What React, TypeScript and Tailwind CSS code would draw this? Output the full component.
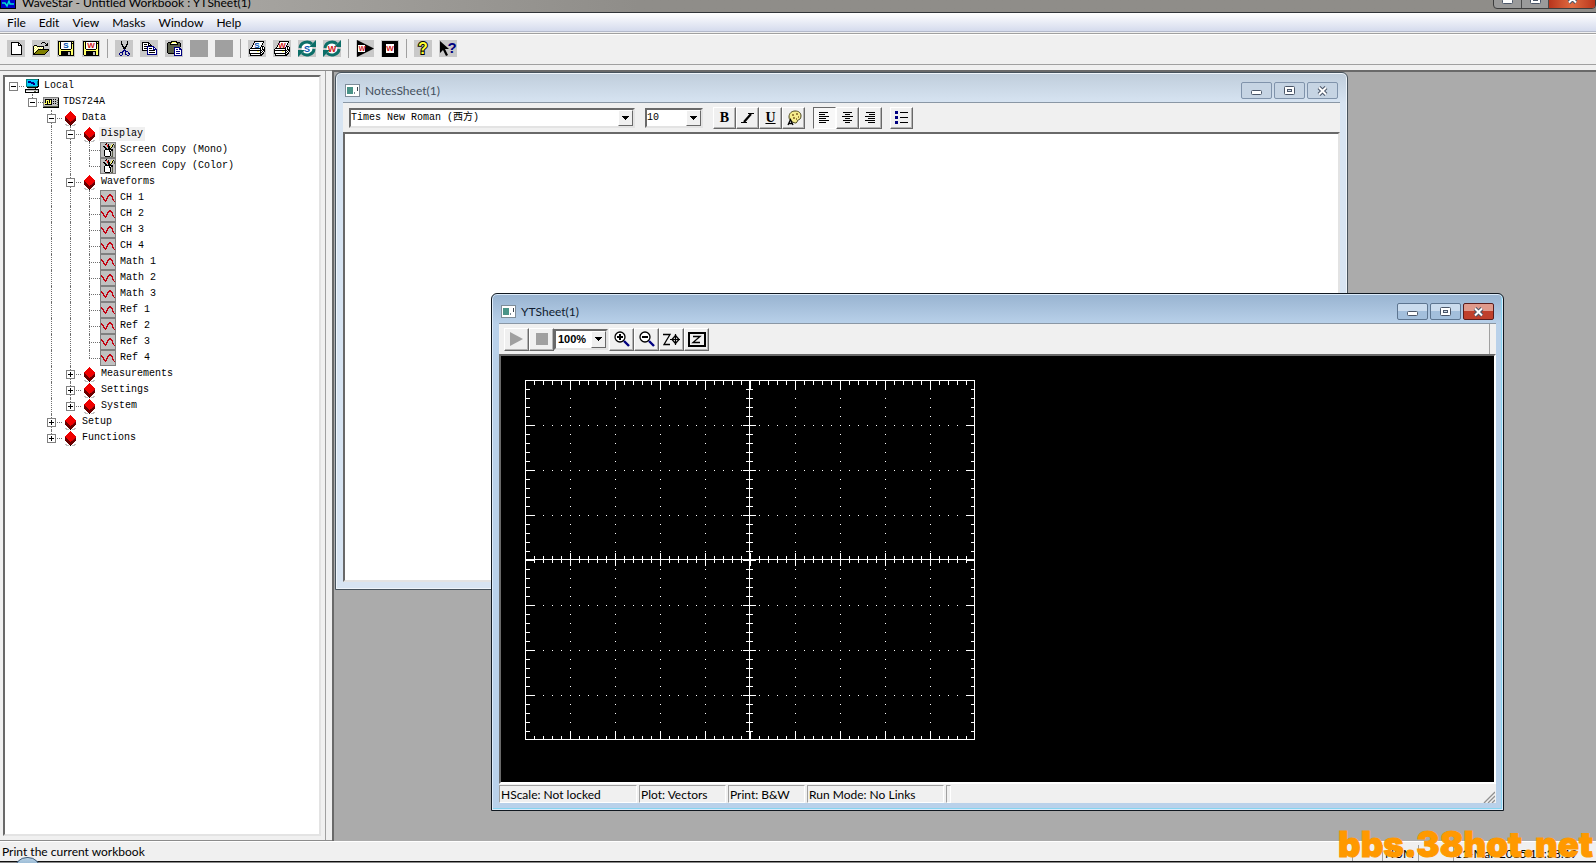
import { useState } from "react";
import type { ReactNode } from "react";

const COLORS: Record<string, string> = {
  k: "#000000",
  w: "#ffffff",
  y: "#ffff66",
  o: "#808000",
  s: "#c0c0c0",
  d: "#808080",
  b: "#000080",
  t: "#008080",
  c: "#00c8ff",
  r: "#f00000",
  m: "#c40010",
  n: "#6a0000",
  g: "#5a5f4a",
};

const Sprite = ({ rows }: { rows: string[] }) => {
  const width = rows[0].length;
  return (
    <svg
      width={width}
      height={rows.length}
      viewBox={`0 0 ${width} ${rows.length}`}
      shapeRendering="crispEdges"
      aria-hidden="true"
      className="block"
    >
      {rows.map((row, y) =>
        row
          .split("")
          .map((ch, x) =>
            COLORS[ch] ? (
              <rect key={`${x}-${y}`} x={x} y={y} width="1" height="1" fill={COLORS[ch]} />
            ) : null,
          ),
      )}
    </svg>
  );
};

const NEW_ROWS = [
  "kkkkkkkk...",
  "kwwwwwwkk..",
  "kwwwwwwkwk.",
  "kwwwwwwkkkk",
  "kwwwwwwwwwk",
  "kwwwwwwwwwk",
  "kwwwwwwwwwk",
  "kwwwwwwwwwk",
  "kwwwwwwwwwk",
  "kwwwwwwwwwk",
  "kwwwwwwwwwk",
  "kwwwwwwwwwk",
  "kkkkkkkkkkk",
];

const OPEN_ROWS = [
  ".........kkk....",
  "........k...k.k.",
  ".............kk.",
  ".kkk........kkk.",
  "kywykkkkkkk.....",
  "kwywywywywk.....",
  "kywywywywyk.....",
  "kwywykkkkkkkkkkk",
  "kywykooooooooook",
  "kwykooooooooook.",
  "kykooooooooook..",
  "kkooooooooook...",
  "kkkkkkkkkkkk....",
];

const SAVE_ROWS = [
  "kkkkkkkkkkkkkkkk",
  "kykwwwwwwwwwwkyk",
  "kykwwwwwwwwwwkkk",
  "kykwwwwwwwwwwkyk",
  "kykwwwwwwwwwwkyk",
  "kykwwwwwwwwwwkyk",
  "kykwwwwwwwwwwkyk",
  "kykwwwwwwwwwwkyk",
  "kyykkkkkkkkkkyyk",
  "kyyyyyyyyyyyyyyk",
  "kyykkkkkkkkkkyyk",
  "kyykkkkkkksskyyk",
  "kyykkkkkkksskyyk",
  "kyykkkkkkksskyyk",
  ".kkkkkkkkkkkkkkk",
];

const CUT_ROWS = [
  "..k.....k..",
  "..k.....k..",
  "..k.....k..",
  "..kk...kk..",
  "...k...k...",
  "...kk.kk...",
  "....kkk....",
  "....kkk....",
  ".....b.....",
  "....bbb....",
  "...bb.bbb..",
  ".bbb..b..b.",
  "b..b..b..bb",
  "b..b..bb..b",
  ".bb.....bb.",
];

const COPY_ROWS = [
  "kkkkkkk........",
  "kwwwwwkk.......",
  "kwkkkwkwk......",
  "kwwwwwkkkk.....",
  "kwkkkbbbbbbb...",
  "kwwwwbwwwwwbb..",
  "kwkkkbwkkkwbwb.",
  "kwwwwbwwwwwbbbb",
  "kkkkkbwkkkkkkwb",
  ".....bwwwwwwwwb",
  ".....bwkkkkkkwb",
  ".....bwwwwwwwwb",
  ".....bbbbbbbbbb",
];

const PASTE_ROWS = [
  "....kkkkkk.....",
  ".kkkkyyyykkkk..",
  "kggkywwwwykggk.",
  "kggkkkkkkkkggk.",
  "kggggggggggggk.",
  "kggggggggggggk.",
  "kggggggbbbbbb..",
  "kggggggbwwwwbb.",
  "kggggggbwbbwbbb",
  "kggggggbwwwwwwb",
  "kggggggbwbbbbwb",
  "kggggggbwwwwwwb",
  ".kkkkkkbwbbbbwb",
  ".......bwwwwwwb",
  ".......bbbbbbbb",
];

const PRINT_ROWS = [
  ".....kkkkkkkkkk.",
  ".....kwwwwwwwwk.",
  "....kwwwwwwwwk..",
  "....kwwwwwwwwk..",
  "...kwwwwwwwwk...",
  "...kwwwwwwwwkkk.",
  "..kwwwwwwwwkwkwk",
  ".kkkkkkkkkkkwkwk",
  "kwwwwwwwwwwkwkkk",
  "kkkkkkkkkkkkkwkk",
  "kwwwwwwwyywkwkwk",
  "kwwwwwwwwwwkkwk.",
  "kkkkkkkkkkkkwkk.",
  ".kwwwwwwwwwkkk..",
  ".kkkkkkkkkkkk...",
];

const COMPUTER_ROWS = [
  ".ttttttttttttk",
  ".tccccccccccck",
  ".tcbbbcccccctk",
  ".tcbbbbbbccctk",
  ".tccccbbbbcctk",
  ".tccccccbbcctk",
  ".tccccccccccck",
  ".tttttttttttkk",
  "..kkkkkkkkkkk.",
  "...sssssssk...",
  "kkkkkkkkkkkkkk",
  "kssssssssssssk",
  "kwwwwwwwwggwsk",
  "kkkkkkkkkkkkkk",
];

const SCOPE_ROWS = [
  "dddddddddddddddd",
  "dssssssssssssssk",
  "dskkkkkkkskskssk",
  "dskyyykyksssssgk",
  "dskykykykskskssk",
  "dskykykyksssssgk",
  "dyyykyyykskskssk",
  "dskkkkkkksssssgk",
  "dssssssssssssssk",
  "dggggggggggggggk",
  "kkkkkkkkkkkkkkkk",
];

const DIAMOND_ROWS = [
  ".....r.....",
  "....rrr....",
  "...rrrrr...",
  "..rrrrrrr..",
  ".rrrrrrrrr.",
  "rrrrrrrrrrr",
  "nrrrrrrrrrm",
  "nnrrrrrrrmn",
  "nnnrrrrrmnn",
  "nnnnrrrmnnn",
  ".nnnnrnnnn.",
  "..nnnnnnn..",
  "...nnnnn...",
  "ss..nnn..ss",
  ".sss.k.sss.",
];

const CAMERA_ROWS = [
  "dddddddddddddddd",
  "dssssskssssssssd",
  "dsssskrsksssyksd",
  "dssssssrkssyksgd",
  "dsskkssrkksyksgd",
  "dssskksskkykssgd",
  "dsssskkskkkssssd",
  "dsssskkkkkkkkssd",
  "dssskwwwwkwkkssd",
  "dssskwwwwkksgssd",
  "dssskwwwwwksgssd",
  "dssskwwwwwksgssd",
  "dssskwwwwwksgssd",
  "dssskwwwwwksgssd",
  "dsssskkkkksggssd",
  "dddddddddddddddd",
];

const WAVE_ROWS = [
  "dddddddddddddddd",
  "dssssssssssssssd",
  "dssssssssssssssd",
  "dssssssssssssssd",
  "dssssssssmmssssd",
  "dmssssssmmmmsssd",
  "dmmssssmmssmmssd",
  "dsmmsssmssssmssd",
  "dssmssmmssssmssd",
  "dssmmsmsssssmmsd",
  "dsssmmmssssssmsd",
  "dssssmssssssssmd",
  "dssssssssssssssd",
  "dssssssssssssssd",
  "dssssssssssssssd",
  "dddddddddddddddd",
];

const Lettered = ({ rows, letter }: { rows: string[]; letter: "S" | "W" }) => (
  <span className="relative block">
    <Sprite rows={rows} />
    <span
      className={`absolute inset-x-0 top-0 text-center font-['Liberation_Sans'] text-[8px] leading-[9px] font-bold ${
        letter === "S" ? "text-[#0050b0]" : "text-[#d02020]"
      }`}
    >
      {letter}
    </span>
  </span>
);

const RefreshIcon = ({ letter }: { letter: "S" | "W" }) => (
  <svg width="18" height="17" viewBox="0 0 18 17" aria-hidden="true">
    <circle cx="9" cy="8.5" r="5.5" fill="#fff" />
    <path d="M2 8 A7 6.5 0 0 1 14 4" fill="none" stroke="#0c6e68" strokeWidth="3" />
    <path d="M11 7 L18 7 L18 0 Z" fill="#0c6e68" />
    <path d="M16 9 A7 6.5 0 0 1 4 13" fill="none" stroke="#0c6e68" strokeWidth="3" />
    <path d="M7 10 L0 10 L0 17 Z" fill="#0c6e68" />
    <text
      x="9"
      y="12"
      textAnchor="middle"
      fontFamily="Liberation Sans"
      fontWeight="700"
      fontSize="9"
      fill={letter === "S" ? "#0050b0" : "#d02020"}
    >
      {letter}
    </text>
  </svg>
);

const RunIcon = () => (
  <svg width="18" height="17" viewBox="0 0 18 17" aria-hidden="true">
    <path d="M1 0 L18 8.5 L1 17 Z" fill="#000" />
    <rect x="2" y="5" width="7" height="7" fill="#fff" />
    <text x="6" y="11" textAnchor="middle" fontFamily="Liberation Sans" fontWeight="700" fontSize="7" fill="#d02020">
      W
    </text>
  </svg>
);

const StopIcon = () => (
  <svg width="18" height="17" viewBox="0 0 18 17" aria-hidden="true">
    <rect x="1" y="1" width="16" height="16" fill="#000" />
    <rect x="5" y="4" width="8" height="9" fill="#fff" />
    <text x="9" y="11" textAnchor="middle" fontFamily="Liberation Sans" fontWeight="700" fontSize="8" fill="#d02020">
      W
    </text>
  </svg>
);

const HelpIcon = () => (
  <svg width="18" height="17" viewBox="0 0 18 17" aria-hidden="true">
    <text
      x="9"
      y="14"
      textAnchor="middle"
      fontFamily="Liberation Sans"
      fontWeight="700"
      fontSize="16"
      fill="#ffff33"
      stroke="#000"
      strokeWidth="2"
      paintOrder="stroke"
    >
      ?
    </text>
  </svg>
);

const ContextHelpIcon = () => (
  <svg width="18" height="17" viewBox="0 0 18 17" aria-hidden="true">
    <path d="M1 1 L1 13 L4 10 L7 16 L9 15 L6 9 L10 9 Z" fill="#000" />
    <text x="13" y="13" textAnchor="middle" fontFamily="Liberation Sans" fontWeight="700" fontSize="15" fill="#000080">
      ?
    </text>
  </svg>
);

const Blank = () => <span className="block h-[17px] w-[18px] bg-[#a0a0a0]" />;

type Tool = { label: string; icon: ReactNode } | null;

const MAIN_TOOLS: Tool[] = [
  { label: "New", icon: <Sprite rows={NEW_ROWS} /> },
  { label: "Open", icon: <Sprite rows={OPEN_ROWS} /> },
  { label: "Save sheet", icon: <Lettered rows={SAVE_ROWS} letter="S" /> },
  { label: "Save workbook", icon: <Lettered rows={SAVE_ROWS} letter="W" /> },
  null,
  { label: "Cut", icon: <Sprite rows={CUT_ROWS} /> },
  { label: "Copy", icon: <Sprite rows={COPY_ROWS} /> },
  { label: "Paste", icon: <Sprite rows={PASTE_ROWS} /> },
  { label: "Undo", icon: <Blank /> },
  { label: "Redo", icon: <Blank /> },
  null,
  { label: "Print sheet", icon: <Lettered rows={PRINT_ROWS} letter="S" /> },
  { label: "Print workbook", icon: <Lettered rows={PRINT_ROWS} letter="W" /> },
  { label: "Refresh sheet", icon: <RefreshIcon letter="S" /> },
  { label: "Refresh workbook", icon: <RefreshIcon letter="W" /> },
  null,
  { label: "Run workbook", icon: <RunIcon /> },
  { label: "Stop workbook", icon: <StopIcon /> },
  null,
  { label: "Help", icon: <HelpIcon /> },
  { label: "Context help", icon: <ContextHelpIcon /> },
];

interface TreeItem {
  name: string;
  icon: string[];
  children?: TreeItem[];
  expandable?: boolean;
  selected?: boolean;
}

const leaf = (name: string): TreeItem => ({ name, icon: WAVE_ROWS });

const TREE: TreeItem = {
  name: "Local",
  icon: COMPUTER_ROWS,
  children: [
    {
      name: "TDS724A",
      icon: SCOPE_ROWS,
      children: [
        {
          name: "Data",
          icon: DIAMOND_ROWS,
          children: [
            {
              name: "Display",
              icon: DIAMOND_ROWS,
              selected: true,
              children: [
                { name: "Screen Copy (Mono)", icon: CAMERA_ROWS },
                { name: "Screen Copy (Color)", icon: CAMERA_ROWS },
              ],
            },
            {
              name: "Waveforms",
              icon: DIAMOND_ROWS,
              children: [
                leaf("CH 1"),
                leaf("CH 2"),
                leaf("CH 3"),
                leaf("CH 4"),
                leaf("Math 1"),
                leaf("Math 2"),
                leaf("Math 3"),
                leaf("Ref 1"),
                leaf("Ref 2"),
                leaf("Ref 3"),
                leaf("Ref 4"),
              ],
            },
            { name: "Measurements", icon: DIAMOND_ROWS, expandable: true },
            { name: "Settings", icon: DIAMOND_ROWS, expandable: true },
            { name: "System", icon: DIAMOND_ROWS, expandable: true },
          ],
        },
        { name: "Setup", icon: DIAMOND_ROWS, expandable: true },
        { name: "Functions", icon: DIAMOND_ROWS, expandable: true },
      ],
    },
  ],
};

interface TreeNodeProps {
  item: TreeItem;
  // one entry per ancestor: does its line run on below this row
  guides: boolean[];
  last: boolean;
  root?: boolean;
}

const TreeNode = ({ item, guides, last, root }: TreeNodeProps) => {
  const [open, setOpen] = useState(Boolean(item.children));
  const hasToggle = Boolean(item.children) || item.expandable;

  return (
    <li>
      <div className="flex h-4 items-center">
        {guides.map((on, i) => (
          <span key={i} className="relative h-4 w-[19px] shrink-0">
            {on && (
              <span className="absolute inset-y-0 left-2 border-l border-dotted border-[#707070]" />
            )}
          </span>
        ))}
        <span className="relative flex h-4 w-[19px] shrink-0 items-center pl-1">
          {!root && (
            <span
              className={`absolute top-0 left-2 border-l border-dotted border-[#707070] ${last ? "h-2" : "h-4"}`}
            />
          )}
          <span className="absolute top-2 right-0 left-2 border-t border-dotted border-[#707070]" />
          {hasToggle && (
            <button
              aria-label={`${open ? "Collapse" : "Expand"} ${item.name}`}
              onClick={() => setOpen(!open)}
              className="relative size-[9px] border border-[#808080] bg-white"
            >
              <span className="absolute top-[3px] left-px h-px w-[5px] bg-black" />
              {!open && <span className="absolute top-px left-[3px] h-[5px] w-px bg-black" />}
            </button>
          )}
        </span>
        <span className="flex h-4 w-4 shrink-0 items-center justify-center">
          <Sprite rows={item.icon} />
        </span>
        <span className={`ml-[2px] px-[2px] whitespace-nowrap ${item.selected ? "bg-[#f0f0f0]" : ""}`}>
          {item.name}
        </span>
      </div>
      {open && item.children && (
        <ul>
          {item.children.map((child, i) => (
            <TreeNode
              key={child.name}
              item={child}
              guides={[...guides, !last]}
              last={i === item.children!.length - 1}
            />
          ))}
        </ul>
      )}
    </li>
  );
};

const MinimizeGlyph = () => (
  <svg width="11" height="5" viewBox="0 0 11 5" aria-hidden="true">
    <rect x="0.5" y="0.5" width="10" height="4" rx="1" fill="#fff" stroke="#4b5668" />
  </svg>
);

const MaximizeGlyph = () => (
  <svg width="11" height="9" viewBox="0 0 11 9" aria-hidden="true">
    <rect x="0.5" y="0.5" width="10" height="8" rx="1" fill="#fff" stroke="#4b5668" />
    <rect x="3.5" y="3.5" width="4" height="2" fill="#cfdbe8" stroke="#4b5668" />
  </svg>
);

const CloseGlyph = () => (
  <svg width="13" height="10" viewBox="0 0 13 10" aria-hidden="true">
    <path d="M3 1.5 L10 8.5 M10 1.5 L3 8.5" stroke="#4b5668" strokeWidth="4" />
    <path d="M3 1.5 L10 8.5 M10 1.5 L3 8.5" stroke="#fff" strokeWidth="2" />
  </svg>
);

interface SheetWindowProps {
  title: string;
  active?: boolean;
  className: string;
  children: ReactNode;
}

const SheetWindow = ({ title, active, className, children }: SheetWindowProps) => {
  const control = active
    ? "border-[#5d7590] bg-linear-to-b from-[#cbdcee] from-50% to-[#a3bfdc] to-50%"
    : "border-[#8093ab] bg-[#c6d4e3]";

  return (
    <section
      className={`absolute flex h-[518px] w-[1013px] flex-col rounded-t-[6px] border px-[7px] pb-[7px] ${
        active
          ? "border-[#101820] bg-linear-to-b from-[#98b3d0] to-[#b9d1ea] to-[30px] shadow-[inset_0_0_0_1px_#dcebfa,inset_-2px_-2px_0_#86d4f0]"
          : "border-[#46525c] bg-linear-to-b from-[#bfcddb] to-[#d7e4f2] to-[30px] shadow-[inset_0_0_0_1px_#eef4fa]"
      } ${className}`}
    >
      <header className="flex h-[29px] shrink-0 items-center px-[2px] pt-[6px]">
        <svg width="15" height="13" viewBox="0 0 15 13" shapeRendering="crispEdges" aria-hidden="true">
          <rect width="15" height="13" fill="#7e8c98" />
          <rect x="1" y="1" width="13" height="11" fill="#fff" />
          <rect x="2" y="3" width="6" height="7" fill="#4a9488" />
          <rect x="9" y="8" width="1" height="2" fill="#7e8c98" />
          <rect x="12" y="3" width="1" height="4" fill="#3c4650" />
        </svg>
        <h2 className={`ml-[5px] flex-1 text-[12px] leading-4 ${active ? "text-[#101c30]" : "text-[#44505e]"}`}>
          {title}
        </h2>
        <div className="flex gap-[2px]">
          <button
            aria-label="Minimize"
            className={`flex h-[17px] w-[31px] items-end justify-center rounded-[2px] border pb-[3px] ${control}`}
          >
            <MinimizeGlyph />
          </button>
          <button
            aria-label="Maximize"
            className={`flex h-[17px] w-[31px] items-center justify-center rounded-[2px] border ${control}`}
          >
            <MaximizeGlyph />
          </button>
          <button
            aria-label="Close"
            className={`flex h-[17px] w-[31px] items-center justify-center rounded-[2px] border ${
              active
                ? "border-[#5a1c1c] bg-linear-to-b from-[#e09a8c] from-50% to-[#c0402c] to-50%"
                : "border-[#8093ab] bg-[#c6d4e3]"
            }`}
          >
            <CloseGlyph />
          </button>
        </div>
      </header>
      <div className="flex min-h-0 flex-1 flex-col border-t border-[#8a97a5] bg-[#f0f0f0]">{children}</div>
    </section>
  );
};

interface ComboProps {
  label: string;
  value: string;
  className: string;
}

const Combo = ({ label, value, className }: ComboProps) => (
  <div
    className={`relative flex border-2 border-t-[#696969] border-r-[#e3e3e3] border-b-[#e3e3e3] border-l-[#696969] bg-white ${className}`}
  >
    <select aria-label={label} className="h-full w-full appearance-none pr-4 outline-none">
      <option>{value}</option>
    </select>
    <span className="pointer-events-none absolute inset-y-0 right-0 flex w-[15px] items-center justify-center border border-t-white border-r-[#696969] border-b-[#696969] border-l-white bg-[#f0f0f0]">
      <svg width="7" height="4" viewBox="0 0 7 4" shapeRendering="crispEdges" aria-hidden="true">
        <path d="M0 0 H7 V1 H6 V2 H5 V3 H4 V4 H3 V3 H2 V2 H1 V1 H0 Z" fill="#000" />
      </svg>
    </span>
  </div>
);

interface ToolButtonProps {
  label: string;
  pressed?: boolean;
  className: string;
  children: ReactNode;
}

const ToolButton = ({ label, pressed, className, children }: ToolButtonProps) => (
  <button
    aria-label={label}
    className={`flex shrink-0 items-center justify-center border ${
      pressed
        ? "border-t-[#696969] border-r-white border-b-white border-l-[#696969] bg-[#f8f8f8]"
        : "border-t-white border-r-[#696969] border-b-[#696969] border-l-white bg-[#f0f0f0] shadow-[inset_-1px_-1px_0_#b4b4b4]"
    } ${className}`}
  >
    {children}
  </button>
);

const AlignIcon = ({ path }: { path: string }) => (
  <svg width="13" height="13" viewBox="0 0 13 13" shapeRendering="crispEdges" aria-hidden="true">
    <path d={path} stroke="#000" />
  </svg>
);

const PaletteIcon = () => (
  <svg width="16" height="16" viewBox="0 0 16 16" aria-hidden="true">
    <path
      d="M9 1 C13 1 15 3 15 6 C15 9 13 10 12 10 C11 10 12 12 10 13 C8 13 3 11 3 7 C3 3 6 1 9 1 Z"
      fill="#f5ec8c"
      stroke="#4c4820"
    />
    <path d="M6 5 h2 M10 4 h2 M12 7 h1 M7 8 h2 M10 9 h1" stroke="#806020" strokeWidth="1.5" />
    <path d="M2 15 L4.5 9.5 L7 15 M3 13.5 H6" stroke="#000" strokeWidth="1.3" fill="none" />
  </svg>
);

const ListIcon = () => (
  <svg width="13" height="13" viewBox="0 0 13 13" shapeRendering="crispEdges" aria-hidden="true">
    <path d="M0 0 h3 v3 h-3 Z M0 5 h3 v3 h-3 Z M0 10 h3 v3 h-3 Z" fill="#000080" />
    <path d="M5 1.5 H13 M5 6.5 H13 M5 11.5 H13" stroke="#000" />
  </svg>
);

const NotesSheet = () => (
  <SheetWindow title="NotesSheet(1)" className="top-0 left-px">
    <div className="flex h-[29px] shrink-0 items-center pl-[6px] font-['Liberation_Mono','Noto_Sans_CJK_SC',monospace] text-[10px]">
      <Combo label="Font" value="Times New Roman (西方)" className="h-5 w-[286px]" />
      <Combo label="Font size" value="10" className="ml-[10px] h-5 w-[58px]" />
      <div className="ml-[10px] flex font-['Liberation_Serif'] text-[14px] leading-4 font-bold">
        <ToolButton label="Bold" className="h-[22px] w-[23px]">
          B
        </ToolButton>
        <ToolButton label="Italic" className="h-[22px] w-[23px]">
          <svg width="13" height="10" viewBox="0 0 13 10" aria-hidden="true">
            <path d="M7 0.5 H13 M0 9.5 H6" stroke="#000" />
            <path d="M10 1 L3 9" stroke="#000" strokeWidth="2.2" />
          </svg>
        </ToolButton>
        <ToolButton label="Underline" className="h-[22px] w-[23px]">
          <span className="underline">U</span>
        </ToolButton>
        <ToolButton label="Color" className="h-[22px] w-[23px]">
          <PaletteIcon />
        </ToolButton>
      </div>
      <div className="ml-2 flex">
        <ToolButton label="Align left" pressed className="h-[22px] w-[23px]">
          <AlignIcon path="M1 1.5 H10 M1 3.5 H7 M1 5.5 H11 M1 7.5 H8 M1 9.5 H11 M1 11.5 H8" />
        </ToolButton>
        <ToolButton label="Align center" className="h-[22px] w-[23px]">
          <AlignIcon path="M2 1.5 H11 M4 3.5 H9 M1 5.5 H12 M4 7.5 H9 M2 9.5 H11 M4 11.5 H9" />
        </ToolButton>
        <ToolButton label="Align right" className="h-[22px] w-[23px]">
          <AlignIcon path="M2 1.5 H11 M5 3.5 H11 M1 5.5 H11 M4 7.5 H11 M1 9.5 H11 M4 11.5 H11" />
        </ToolButton>
      </div>
      <div className="ml-2 flex">
        <ToolButton label="Bullets" className="h-[22px] w-[23px]">
          <ListIcon />
        </ToolButton>
      </div>
    </div>
    <textarea
      aria-label="Notes"
      className="w-full flex-1 resize-none border-2 border-t-[#696969] border-r-[#e3e3e3] border-b-[#e3e3e3] border-l-[#696969] bg-white outline-none"
    />
  </SheetWindow>
);

const DIV = 45;
const MINOR = 9;
const GRID_W = DIV * 10;
const GRID_H = DIV * 8;
// solid lines sit one pixel before the division they close
const RIGHT = GRID_W - 1;
const BOTTOM = GRID_H - 1;
const MID_X = GRID_W / 2 - 1;
const MID_Y = GRID_H / 2 - 1;

const Graticule = () => {
  const ticks: string[] = [];
  const dots: string[] = [];

  for (let x = MINOR; x < GRID_W; x += MINOR) {
    const major = x % DIV === 0;
    const edge = major ? 9 : 4;
    const mid = major ? 6 : 3;
    ticks.push(`M${x} 0v${edge}M${x} ${BOTTOM}v${-edge}`);
    ticks.push(`M${x} ${MID_Y - mid - 0.5}v${mid * 2 + 1}`);
    for (let row = 1; row < 8; row++) {
      if (row !== 4 && x > MINOR && x < GRID_W - MINOR) dots.push(`M${x - 0.5} ${row * DIV}h1`);
    }
  }
  for (let y = MINOR; y < GRID_H; y += MINOR) {
    const major = y % DIV === 0;
    const edge = major ? 9 : 4;
    const mid = major ? 6 : 3;
    ticks.push(`M0 ${y}h${edge}M${RIGHT} ${y}h${-edge}`);
    ticks.push(`M${MID_X - mid - 0.5} ${y}h${mid * 2 + 1}`);
    for (let col = 1; col < 10; col++) {
      if (col !== 5 && y > MINOR && y < GRID_H - MINOR) dots.push(`M${col * DIV - 0.5} ${y}h1`);
    }
  }

  return (
    <svg width="452" height="362" viewBox="-0.5 -0.5 452 362" shapeRendering="crispEdges" role="img" aria-label="Graticule">
      <path d={ticks.join("")} stroke="#fff" fill="none" />
      <path d={dots.join("")} stroke="#fff" fill="none" />
      <path
        d={`M0 0H${RIGHT}V${BOTTOM}H0ZM${MID_X} 0V${BOTTOM}M0 ${MID_Y}H${RIGHT}`}
        stroke="#fff"
        fill="none"
      />
    </svg>
  );
};

const Magnifier = ({ plus }: { plus?: boolean }) => (
  <svg width="16" height="16" viewBox="0 0 16 16" aria-hidden="true">
    <circle cx="6" cy="6" r="5" fill="#fff" stroke="#000" strokeWidth="1.3" />
    <path d={plus ? "M3 6 H9 M6 3 V9" : "M3 6 H9"} stroke="#000" strokeWidth="2" />
    <path d="M10 10 L15 15" stroke="#000080" strokeWidth="2.4" />
  </svg>
);

const STATUS_PANES = [
  { text: "HScale: Not locked", width: "w-[138px]" },
  { text: "Plot: Vectors", width: "w-[87px]" },
  { text: "Print: B&W", width: "w-[77px]" },
  { text: "Run Mode: No Links", width: "w-[137px]" },
];

const YTSheet = () => (
  <SheetWindow title="YTSheet(1)" active className="top-[221px] left-[157px]">
    <div className="flex h-[30px] shrink-0">
      <div className="flex flex-1 items-center border-r border-[#a0a0a0] pl-[5px]">
        <ToolButton label="Run" className="h-[23px] w-[25px]">
          <svg width="13" height="14" viewBox="0 0 13 14" aria-hidden="true">
            <path d="M0 0 L13 7 L0 14 Z" fill="#a0a0a0" />
          </svg>
        </ToolButton>
        <ToolButton label="Stop" className="h-[23px] w-[25px]">
          <span className="size-3 bg-[#a0a0a0]" />
        </ToolButton>
        <Combo
          label="Zoom"
          value="100%"
          className="h-[21px] w-[54px] pl-[2px] font-['Liberation_Sans'] text-[11px] font-bold"
        />
        <ToolButton label="Zoom in" className="ml-px h-[23px] w-[25px]">
          <Magnifier plus />
        </ToolButton>
        <ToolButton label="Zoom out" className="h-[23px] w-[25px]">
          <Magnifier />
        </ToolButton>
        <ToolButton label="Zoom cursor" className="h-[23px] w-[25px]">
          <svg width="17" height="13" viewBox="0 0 17 13" aria-hidden="true">
            <path d="M0 1.5 H7 L1 11.5 H7" stroke="#000" strokeWidth="1.3" fill="none" />
            <path d="M7 6.5 H17 M12.5 1 V12" stroke="#000" strokeWidth="1.2" fill="none" />
            <path d="M12.5 2.5 L16 6.5 L12.5 10.5 L9 6.5 Z" stroke="#000" strokeWidth="1.3" fill="none" />
          </svg>
        </ToolButton>
        <ToolButton label="Zoom window" className="h-[23px] w-[25px]">
          <svg width="18" height="15" viewBox="0 0 18 15" aria-hidden="true">
            <rect x="1" y="1" width="16" height="13" stroke="#000" strokeWidth="2" fill="none" />
            <path d="M5 4.5 H12 L5 10.5 H12" stroke="#000" strokeWidth="1.3" fill="none" />
          </svg>
        </ToolButton>
      </div>
      <span className="w-[6px]" />
    </div>
    <div className="flex-1 border-2 border-t-[#696969] border-r-white border-b-white border-l-[#696969] bg-black pt-6 pl-6">
      <Graticule />
    </div>
    <footer className="flex h-[19px] shrink-0 items-end gap-[2px] text-[12px] leading-[18px]">
      {STATUS_PANES.map((pane) => (
        <span
          key={pane.text}
          className={`h-[18px] border border-t-[#a0a0a0] border-r-white border-b-white border-l-[#a0a0a0] pl-px whitespace-nowrap ${pane.width}`}
        >
          {pane.text}
        </span>
      ))}
      <span className="h-[18px] w-[5px] border border-t-[#a0a0a0] border-r-white border-b-white border-l-[#a0a0a0]" />
      <svg className="ml-auto mr-px" width="12" height="12" viewBox="0 0 12 12" aria-hidden="true">
        <path d="M1 12 L12 1 M5 12 L12 5 M9 12 L12 9" stroke="#909090" strokeWidth="1.3" />
      </svg>
    </footer>
  </SheetWindow>
);

const MENUS = ["File", "Edit", "View", "Masks", "Window", "Help"];

export default function App() {
  return (
    <div className="relative flex h-screen min-h-0 flex-col overflow-hidden bg-[#f0f0f0] font-['Lato','Open_Sans',sans-serif] text-black">
      <header className="flex h-[13px] shrink-0 flex-col justify-end overflow-hidden border-b border-[#303438] bg-linear-to-r from-[#b4b2ae] to-[#8f8d89] to-40%">
        <div className="flex h-[18px] shrink-0 items-center">
          <svg width="16" height="15" viewBox="0 0 16 15" className="self-start" aria-hidden="true">
            <rect x="0.5" y="0.5" width="15" height="14" fill="#0000c8" stroke="#000" />
            <path d="M2 9 H5 L7 12 L9 7 L10 10 H14" stroke="#00e0d0" strokeWidth="1.5" fill="none" />
          </svg>
          <h1 className="ml-[6px] flex-1 text-[12px] leading-4 whitespace-nowrap">
            WaveStar - Untitled Workbook : YTSheet(1)
          </h1>
          <div className="flex h-[15px] self-start overflow-hidden rounded-b-[4px] border border-[#3c3c3c] bg-[#9a9a9a]">
            <button aria-label="Minimize" className="flex w-[28px] items-end justify-center border-r border-[#4a4a4a] pb-1">
              <MinimizeGlyph />
            </button>
            <button aria-label="Restore" className="flex w-[27px] items-end justify-center border-r border-[#4a4a4a] pb-1">
              <MaximizeGlyph />
            </button>
            <button
              aria-label="Close"
              className="flex w-[46px] items-end justify-center bg-linear-to-r from-[#b8341c] via-[#e06a40] to-[#b8341c] pb-1"
            >
              <CloseGlyph />
            </button>
          </div>
        </div>
      </header>

      <nav className="flex h-[19px] shrink-0 items-center border-b border-[#b4bacb] bg-linear-to-b from-white to-[#d5dbed] text-[12px] leading-4">
        {MENUS.map((menu) => (
          <button key={menu} className="pt-px pr-[6px] pl-[7px]">
            {menu}
          </button>
        ))}
      </nav>

      <div className="mt-px flex h-8 shrink-0 items-center border-t border-b border-[#a0a0a0] pb-px pl-1 shadow-[inset_0_1px_0_#fff]">
        {MAIN_TOOLS.map((tool, i) =>
          tool ? (
            <button key={tool.label} aria-label={tool.label} className="w-[25px] pl-[3px]">
              <span className="flex h-[17px] w-[18px] items-center justify-center bg-[#c8c8c8]">
                {tool.icon}
              </span>
            </button>
          ) : (
            <span key={i} className="h-[19px] w-2 pl-[3px]">
              <span className="block h-full w-px bg-[#a0a0a0]" />
            </span>
          ),
        )}
      </div>

      <main className="mt-[5px] flex min-h-0 flex-1">
        <aside className="flex w-[332px] shrink-0 border-t border-b border-[#8c8c8c] pr-[6px]">
          <div className="flex flex-1 border-r border-[#a0a0a0] pt-1 pr-1 pb-1 pl-[3px]">
            <ul className="flex-1 border-2 border-t-[#696969] border-r-[#e3e3e3] border-b-[#e3e3e3] border-l-[#696969] bg-white pt-px font-['Liberation_Mono',monospace] text-[10px] leading-[14px]">
              <TreeNode item={TREE} guides={[]} last root />
            </ul>
          </div>
        </aside>
        <div className="relative flex-1 overflow-hidden border-t-2 border-l-2 border-[#696969] bg-[#ababab]">
          <NotesSheet />
          <YTSheet />
        </div>
      </main>

      <footer className="flex h-[21px] shrink-0 items-end border-b border-[#101010] pl-[2px] text-[12px] leading-[18px] shadow-[inset_0_1px_0_#fff]">
        <span className="flex-1">Print the current workbook</span>
        <span className="h-4 w-[30px] border-l border-[#a0a0a0]" />
        <span className="h-4 w-[36px] border-l border-[#a0a0a0] pl-[2px]">NUM</span>
        <span className="h-4 w-[35px] border-l border-[#a0a0a0]" />
        <span className="h-4 w-[143px] border-l border-[#a0a0a0] pl-px whitespace-nowrap">11-Mar-2015 13:38:19</span>
      </footer>
      <div className="h-px shrink-0 bg-[#8a8a8a]" />

      <span className="absolute -bottom-5 left-3.5 h-[26px] w-[27px] rounded-full border border-[#3c5a78] bg-linear-to-b from-[#b4cfe4] to-[#4f7fa8]" />
      <span className="absolute right-[3px] bottom-0 font-['Inter',sans-serif] text-[35px] leading-[38px] font-black text-[#ff9900] [-webkit-text-stroke:1px_#ff9900]">
        bbs.38hot.net
      </span>
    </div>
  );
}
